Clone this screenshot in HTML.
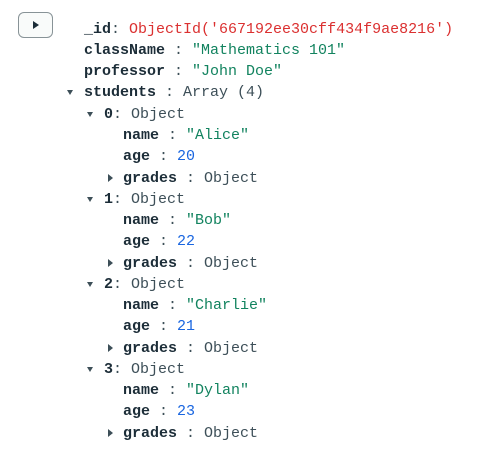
<!DOCTYPE html>
<html><head><meta charset="utf-8"><style>
body{margin:0;width:477px;height:452px;background:#fff;position:relative;overflow:hidden;font-family:"Liberation Mono",monospace;font-size:15px;}
.btn{position:absolute;left:18px;top:12px;width:35px;height:26px;border:1px solid #889397;border-radius:6px;background:#f9fbfa;box-sizing:border-box;}
.btn:after{content:"";position:absolute;left:14px;top:8px;border-left:6px solid #1c2d38;border-top:4.5px solid transparent;border-bottom:4.5px solid transparent;}
.l{position:absolute;height:21px;line-height:21px;white-space:pre;color:#3d4f58;}
.k{font-weight:bold;color:#1c2d38;}
.s{color:#12835f;}
.n{color:#1a66e0;}
.o{color:#db3030;}
.td:before{content:"";position:absolute;left:-17px;top:8px;border-top:5px solid #3d4f58;border-left:3.5px solid transparent;border-right:3.5px solid transparent;}
.tr:before{content:"";position:absolute;left:-15px;top:6px;border-left:5px solid #3d4f58;border-top:4px solid transparent;border-bottom:4px solid transparent;}
</style></head><body>
<div class="btn"></div>
<div class="l" style="left:84px;top:19px"><span class="k">_id</span>: <span class="o">ObjectId('667192ee30cff434f9ae8216')</span></div>
<div class="l" style="left:84px;top:40px"><span class="k">className</span> : <span class="s">"Mathematics 101"</span></div>
<div class="l" style="left:84px;top:61px"><span class="k">professor</span> : <span class="s">"John Doe"</span></div>
<div class="l td" style="left:84px;top:82px"><span class="k">students</span> : Array (4)</div>

<div class="l td" style="left:104px;top:104px"><span class="k">0</span>: Object</div>
<div class="l" style="left:123px;top:125px"><span class="k">name</span> : <span class="s">"Alice"</span></div>
<div class="l" style="left:123px;top:146px"><span class="k">age</span> : <span class="n">20</span></div>
<div class="l tr" style="left:123px;top:168px"><span class="k">grades</span> : Object</div>

<div class="l td" style="left:104px;top:189px"><span class="k">1</span>: Object</div>
<div class="l" style="left:123px;top:210px"><span class="k">name</span> : <span class="s">"Bob"</span></div>
<div class="l" style="left:123px;top:231px"><span class="k">age</span> : <span class="n">22</span></div>
<div class="l tr" style="left:123px;top:253px"><span class="k">grades</span> : Object</div>

<div class="l td" style="left:104px;top:274px"><span class="k">2</span>: Object</div>
<div class="l" style="left:123px;top:295px"><span class="k">name</span> : <span class="s">"Charlie"</span></div>
<div class="l" style="left:123px;top:316px"><span class="k">age</span> : <span class="n">21</span></div>
<div class="l tr" style="left:123px;top:338px"><span class="k">grades</span> : Object</div>

<div class="l td" style="left:104px;top:359px"><span class="k">3</span>: Object</div>
<div class="l" style="left:123px;top:380px"><span class="k">name</span> : <span class="s">"Dylan"</span></div>
<div class="l" style="left:123px;top:401px"><span class="k">age</span> : <span class="n">23</span></div>
<div class="l tr" style="left:123px;top:423px"><span class="k">grades</span> : Object</div>
</body></html>
